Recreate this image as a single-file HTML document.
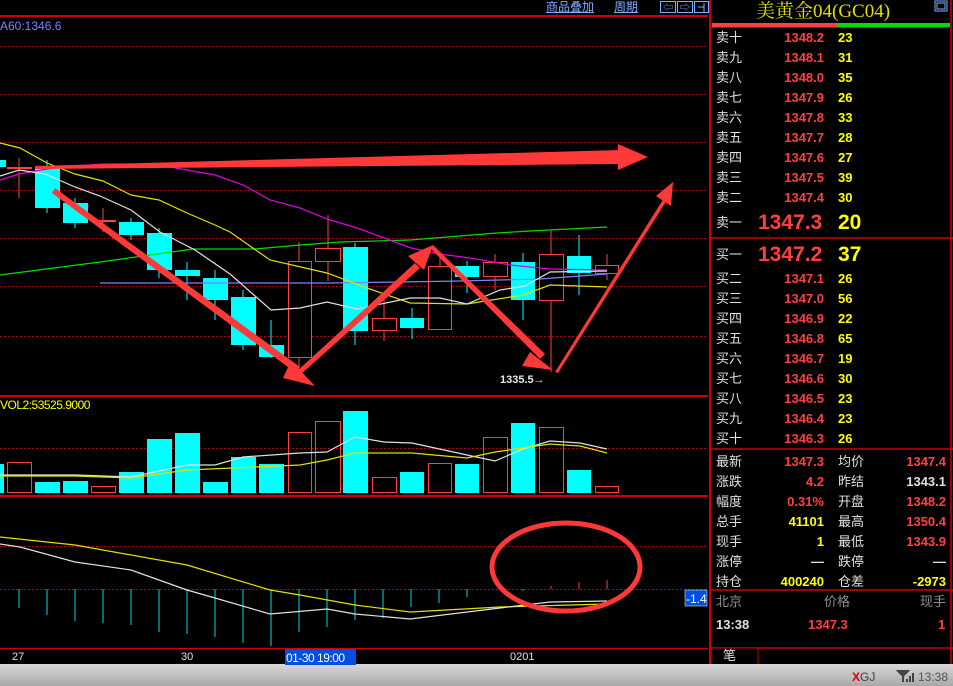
<!DOCTYPE html>
<html><head><meta charset="utf-8"><style>
*{margin:0;padding:0;box-sizing:border-box}
body{width:953px;height:686px;background:#000;overflow:hidden;position:relative;font-family:"Liberation Sans","Noto Sans CJK SC",sans-serif;font-size:13px}
.a{position:absolute;white-space:nowrap;line-height:16px}
.w{color:#e0e0e0}.r{color:#ff4040}.y{color:#ffff00}
.rt{text-align:right}
</style></head><body>
<svg width="953" height="686" style="position:absolute;left:0;top:0" xmlns="http://www.w3.org/2000/svg">
<g stroke="#c00000" stroke-dasharray="2,2" stroke-width="1">
<line x1="0" y1="46.5" x2="708" y2="46.5"/><line x1="0" y1="94.5" x2="708" y2="94.5"/><line x1="0" y1="142.5" x2="708" y2="142.5"/><line x1="0" y1="190.5" x2="708" y2="190.5"/><line x1="0" y1="238.5" x2="708" y2="238.5"/><line x1="0" y1="286.5" x2="708" y2="286.5"/><line x1="0" y1="336.5" x2="708" y2="336.5"/>
<line x1="0" y1="448.5" x2="708" y2="448.5"/><line x1="0" y1="546.5" x2="708" y2="546.5"/><line x1="0" y1="589.5" x2="708" y2="589.5"/>
</g>
<g stroke="#d00000" stroke-width="2">
<line x1="0" y1="16" x2="708" y2="16"/><line x1="0" y1="396" x2="708" y2="396"/><line x1="0" y1="496" x2="708" y2="496"/><line x1="0" y1="649" x2="708" y2="649"/>
<line x1="710" y1="0" x2="710" y2="664"/>
</g>
<!-- candles -->
<g stroke="#ff4040" stroke-width="1">
<line x1="19" y1="158" x2="19" y2="198"/><line x1="7" y1="168" x2="32" y2="168" stroke-width="2"/>
<line x1="103" y1="208" x2="103" y2="232"/><line x1="91" y1="221" x2="116" y2="221" stroke-width="2"/>
<line x1="299" y1="242" x2="299" y2="368"/><line x1="328" y1="215" x2="328" y2="281"/><line x1="384" y1="300" x2="384" y2="341"/>
<line x1="440" y1="257" x2="440" y2="329"/><line x1="495" y1="254" x2="495" y2="290"/><line x1="551" y1="230" x2="551" y2="372"/><line x1="607" y1="254" x2="607" y2="280"/>
</g>
<g fill="#000" stroke="#ff4040" stroke-width="1">
<rect x="288.5" y="261.5" width="23" height="96"/><rect x="315.5" y="248.5" width="25" height="13"/><rect x="372.5" y="318.5" width="24" height="12"/>
<rect x="428.5" y="266.5" width="23" height="63"/><rect x="483.5" y="262.5" width="24" height="14"/><rect x="539.5" y="254.5" width="24" height="46"/><rect x="595.5" y="265.5" width="23" height="8"/>
</g>
<g stroke="#00ffff" stroke-width="1">
<line x1="47" y1="160" x2="47" y2="213"/><line x1="75" y1="198" x2="75" y2="228"/><line x1="131" y1="218" x2="131" y2="240"/><line x1="159" y1="228" x2="159" y2="278"/><line x1="187" y1="262" x2="187" y2="300"/><line x1="215" y1="270" x2="215" y2="320"/><line x1="243" y1="290" x2="243" y2="350"/><line x1="271" y1="320" x2="271" y2="358"/><line x1="355" y1="243" x2="355" y2="345"/><line x1="412" y1="308" x2="412" y2="339"/><line x1="467" y1="261" x2="467" y2="293"/><line x1="523" y1="253" x2="523" y2="320"/><line x1="579" y1="235" x2="579" y2="295"/>
</g>
<g fill="#00ffff">
<rect x="0" y="160" width="6" height="7"/><rect x="35" y="167" width="25" height="41"/><rect x="63" y="203" width="25" height="20"/><rect x="119" y="222" width="25" height="13"/><rect x="147" y="233" width="25" height="37"/><rect x="175" y="270" width="25" height="6"/><rect x="203" y="278" width="25" height="22"/><rect x="231" y="297" width="25" height="48"/><rect x="259" y="345" width="25" height="12"/><rect x="343" y="247" width="25" height="84"/><rect x="400" y="318" width="24" height="10"/><rect x="455" y="266" width="24" height="11"/><rect x="511" y="262" width="24" height="38"/><rect x="567" y="256" width="24" height="17"/>
</g>
<!-- MA lines -->
<g fill="none" stroke-width="1.2">
<polyline stroke="#00dd00" points="0,275 100,262 193,249 255,249 300,245 340,242 410,240 497,233 530,231 607,227"/>
<polyline stroke="#8080ff" points="100,283 230,283 330,283 400,282 460,281 540,279 607,274"/>
<polyline stroke="#e000e0" points="0,180 19,174 47,169 75,166 103,164 131,164 159,165 187,170 215,175 243,185 270,200 300,208 327,219 357,228 411,248 440,254 470,258 510,265 550,269 607,270"/>
<polyline stroke="#e0e000" points="0,143 20,148 47,163 75,174 103,181 131,195 159,200 187,213 215,225 230,232 270,260 327,273 367,288 410,303 467,304 523,295 550,285 607,287"/>
<polyline stroke="#e0e0e0" points="0,176 19,170 45,174 75,187 100,196 131,210 160,232 195,250 230,274 271,310 300,308 327,302 357,309 410,298 440,298 467,304 500,290 525,286 550,272 607,271"/>
</g>
<!-- arrows -->
<g fill="#ff3838">
<polygon points="35,166 620,150 620,164 35,169"/><polygon points="618,144 648,157 618,170"/>
<polygon points="55,188 300,367 296,373 52,193"/><polygon points="291,361 315,386 283,378"/>
<polygon points="296,372 415,263 420,268 300,375"/><polygon points="408,256 433,245 424,270"/>
<polygon points="433,245 545,354 540,359 431,249"/><polygon points="530,352 553,370 522,366"/>
<polygon points="555,372 664,198 667,200 558,373"/><polygon points="656,196 673,182 671,206"/>
</g>
<text x="500" y="383" fill="#e8e8e8" font-family="Liberation Sans" font-weight="bold" font-size="11">1335.5→</text>
<!-- volume -->
<g fill="#00ffff">
<rect x="0" y="464" width="4" height="29"/><rect x="35" y="482" width="25" height="11"/><rect x="63" y="481" width="25" height="12"/><rect x="119" y="472" width="25" height="21"/><rect x="147" y="439" width="25" height="54"/><rect x="175" y="433" width="25" height="60"/><rect x="203" y="482" width="25" height="11"/><rect x="231" y="457" width="25" height="36"/><rect x="259" y="464" width="25" height="29"/><rect x="343" y="411" width="25" height="82"/><rect x="400" y="472" width="24" height="21"/><rect x="455" y="464" width="24" height="29"/><rect x="511" y="423" width="24" height="70"/><rect x="567" y="470" width="24" height="23"/>
</g>
<g fill="none" stroke="#ff4040" stroke-width="1">
<rect x="7.5" y="462.5" width="24" height="30"/><rect x="91.5" y="486.5" width="24" height="6"/><rect x="288.5" y="432.5" width="23" height="60"/><rect x="315.5" y="421.5" width="25" height="71"/><rect x="372.5" y="477.5" width="24" height="15"/><rect x="428.5" y="463.5" width="23" height="29"/><rect x="483.5" y="437.5" width="24" height="55"/><rect x="539.5" y="427.5" width="24" height="65"/><rect x="595.5" y="486.5" width="23" height="6"/>
</g>
<g fill="none" stroke-width="1.2">
<polyline stroke="#e0e0e0" points="0,475 75,475 131,477 187,465 215,465 243,457 300,453 327,452 355,437 384,442 412,443 467,455 495,461 523,449 550,441 580,443 607,449"/>
<polyline stroke="#e0e000" points="0,476 75,476 131,478 187,470 300,465 327,460 355,453 412,453 467,458 495,452 523,448 550,444 580,446 607,453"/>
</g>
<!-- MACD -->
<g stroke="#00dddd" stroke-width="1">
<line x1="19" y1="589" x2="19" y2="608"/><line x1="47" y1="589" x2="47" y2="615"/><line x1="75" y1="589" x2="75" y2="621"/><line x1="103" y1="589" x2="103" y2="623"/><line x1="131" y1="589" x2="131" y2="625"/><line x1="159" y1="589" x2="159" y2="632"/><line x1="187" y1="589" x2="187" y2="634"/><line x1="215" y1="589" x2="215" y2="637"/><line x1="243" y1="589" x2="243" y2="643"/><line x1="271" y1="589" x2="271" y2="646"/><line x1="299" y1="589" x2="299" y2="632"/><line x1="327" y1="589" x2="327" y2="627"/><line x1="355" y1="589" x2="355" y2="620"/><line x1="383" y1="589" x2="383" y2="618"/><line x1="411" y1="589" x2="411" y2="607"/><line x1="439" y1="589" x2="439" y2="603"/><line x1="467" y1="589" x2="467" y2="597"/><line x1="523" y1="589" x2="523" y2="591"/>
</g>
<g stroke="#ff4040" stroke-width="1"><line x1="551" y1="589" x2="551" y2="586"/><line x1="579" y1="589" x2="579" y2="582"/><line x1="607" y1="589" x2="607" y2="580"/></g>
<g fill="none" stroke-width="1.2">
<polyline stroke="#e0e000" points="0,537 75,545 187,565 270,590 300,595 355,605 410,612 500,607 607,604"/>
<polyline stroke="#e0e0e0" points="0,544 20,547 75,562 131,570 187,590 215,598 270,614 327,609 355,614 410,619 500,608 550,602 607,601"/>
</g>
<ellipse cx="566" cy="567" rx="74" ry="44" fill="none" stroke="#ff3838" stroke-width="5"/>
<!-- right panel lines -->
<g stroke="#d00000" stroke-width="1.5">
<line x1="710" y1="238" x2="953" y2="238"/><line x1="710" y1="449" x2="953" y2="449"/><line x1="710" y1="590" x2="953" y2="590"/><line x1="710" y1="648" x2="953" y2="648"/>
<line x1="951" y1="0" x2="951" y2="664"/>
</g>
<rect x="712" y="23" width="125" height="4" fill="#ff4040"/><rect x="837" y="23" width="113" height="4" fill="#00dd00"/>
<rect x="711" y="27" width="240" height="1" fill="#d00000"/>
<path d="M711 664 L711 650 Q711 648 714 648 L756 648 Q758 648 758 651 L758 664" fill="#000" stroke="#d00000" stroke-width="1"/>
<rect x="935" y="1" width="12" height="10" fill="none" stroke="#80b0ff" stroke-width="1"/><rect x="937" y="3" width="8" height="6" fill="none" stroke="#80b0ff"/>
<!-- top buttons -->
<g fill="none" stroke="#80b0ff" stroke-width="1"><rect x="660.5" y="1.5" width="15" height="11"/><rect x="677.5" y="1.5" width="15" height="11"/><rect x="694.5" y="1.5" width="14" height="11"/></g>
<text x="663" y="11" fill="#80b0ff" font-size="10">⇦</text><text x="680" y="11" fill="#80b0ff" font-size="10">⇨</text>
<line x1="698" y1="7" x2="704" y2="7" stroke="#80b0ff"/><line x1="704" y1="3" x2="704" y2="12" stroke="#80b0ff"/>
<!-- status bar -->
<defs><linearGradient id="g" x1="0" y1="0" x2="0" y2="1"><stop offset="0" stop-color="#d8d8d8"/><stop offset="1" stop-color="#a8a8a8"/></linearGradient></defs>
<rect x="0" y="664" width="953" height="22" fill="url(#g)"/>
<rect x="0" y="649" width="708" height="15" fill="#000"/>
<rect x="285" y="649" width="71" height="16" fill="#0050e0"/>
<rect x="685" y="590" width="22" height="16" fill="#0050e0" stroke="#fff" stroke-width="0.5"/>
<path d="M898 671 L908 671 L903 676 Z M903 676 L903 682" stroke="#444" stroke-width="2" fill="#444"/>
<rect x="906" y="679" width="2" height="3" fill="#444"/><rect x="909" y="676" width="2" height="6" fill="#444"/><rect x="912" y="673" width="2" height="9" fill="#444"/>
</svg>
<div class="a" style="left:0;top:18px;color:#8080ff;font-size:12px">A60:1346.6</div>
<div class="a" style="left:546px;top:-1px;color:#80b0ff;font-size:12px;text-decoration:underline">商品叠加</div>
<div class="a" style="left:614px;top:-1px;color:#80b0ff;font-size:12px;text-decoration:underline">周期</div>
<div class="a" style="left:0;top:397px;color:#ffff00;font-size:12px;letter-spacing:-0.5px">VOL2:53525.9000</div>
<div class="a" style="left:686px;top:591px;color:#fff;font-size:12px">-1.4</div>
<div class="a w" style="left:12px;top:649px;font-size:11px">27</div>
<div class="a w" style="left:181px;top:649px;font-size:11px">30</div>
<div class="a" style="left:286px;top:650px;font-size:12px;color:#fff;letter-spacing:-0.5px">01-30 19:00</div>
<div class="a w" style="left:510px;top:649px;font-size:11px">0201</div>
<div class="a" style="left:756px;top:1px;color:#e0e000;font-size:19px;line-height:22px;font-family:'Liberation Serif','Noto Serif CJK SC',serif">美黄金04(GC04)</div>
<div id="ob"></div>
<div class="a w" style="left:716px;top:452px;line-height:20px">最新<br>涨跌<br>幅度<br>总手<br>现手<br>涨停<br>持仓</div>
<div class="a rt" style="left:760px;width:64px;top:452px;line-height:20px;font-weight:bold"><span class="r">1347.3</span><br><span class="r">4.2</span><br><span class="r">0.31%</span><br><span class="y">41101</span><br><span class="y">1</span><br><span class="w">—</span><br><span class="y">400240</span></div>
<div class="a w" style="left:838px;top:452px;line-height:20px">均价<br>昨结<br>开盘<br>最高<br>最低<br>跌停<br>仓差</div>
<div class="a rt" style="left:880px;width:66px;top:452px;line-height:20px;font-weight:bold"><span class="r">1347.4</span><br><span class="w">1343.1</span><br><span class="r">1348.2</span><br><span class="r">1350.4</span><br><span class="r">1343.9</span><br><span class="w">—</span><br><span class="y">-2973</span></div>
<div class="a" style="left:716px;top:594px;color:#909090">北京</div>
<div class="a" style="left:824px;top:594px;color:#909090">价格</div>
<div class="a" style="left:920px;top:594px;color:#909090">现手</div>
<div class="a w" style="left:716px;top:617px;font-weight:bold">13:38</div>
<div class="a r" style="left:808px;top:617px;font-weight:bold">1347.3</div>
<div class="a r" style="left:938px;top:617px;font-weight:bold">1</div>
<div class="a w" style="left:723px;top:648px;font-size:13px">笔</div>
<div class="a" style="left:852px;top:669px;font-size:12px;color:#444"><span style="color:#e00000;font-weight:bold">X</span>GJ</div>
<div class="a" style="left:918px;top:669px;font-size:12px;color:#555">13:38</div>
<script>
var s=[["卖十","1348.2","23"],["卖九","1348.1","31"],["卖八","1348.0","35"],["卖七","1347.9","26"],["卖六","1347.8","33"],["卖五","1347.7","28"],["卖四","1347.6","27"],["卖三","1347.5","39"],["卖二","1347.4","30"]];
var b=[["买二","1347.1","26"],["买三","1347.0","56"],["买四","1346.9","22"],["买五","1346.8","65"],["买六","1346.7","19"],["买七","1346.6","30"],["买八","1346.5","23"],["买九","1346.4","23"],["买十","1346.3","26"]];
var h="";
function row(r,y){h+='<div class="a w" style="left:716px;top:'+y+'px">'+r[0]+'</div><div class="a r rt" style="left:760px;width:64px;top:'+y+'px;font-weight:bold">'+r[1]+'</div><div class="a y" style="left:838px;top:'+y+'px;font-weight:bold">'+r[2]+'</div>';}
s.forEach(function(r,i){row(r,30+i*20)});
b.forEach(function(r,i){row(r,271+i*20)});
h+='<div class="a w" style="left:716px;top:215px">卖一</div><div class="a r" style="left:758px;top:210px;font-size:21px;line-height:26px;font-weight:bold">1347.3</div><div class="a y" style="left:838px;top:210px;font-size:21px;line-height:26px;font-weight:bold">20</div>';
h+='<div class="a w" style="left:716px;top:247px">买一</div><div class="a r" style="left:758px;top:242px;font-size:21px;line-height:26px;font-weight:bold">1347.2</div><div class="a y" style="left:838px;top:242px;font-size:21px;line-height:26px;font-weight:bold">37</div>';
document.getElementById("ob").innerHTML=h;
</script>
</body></html>
